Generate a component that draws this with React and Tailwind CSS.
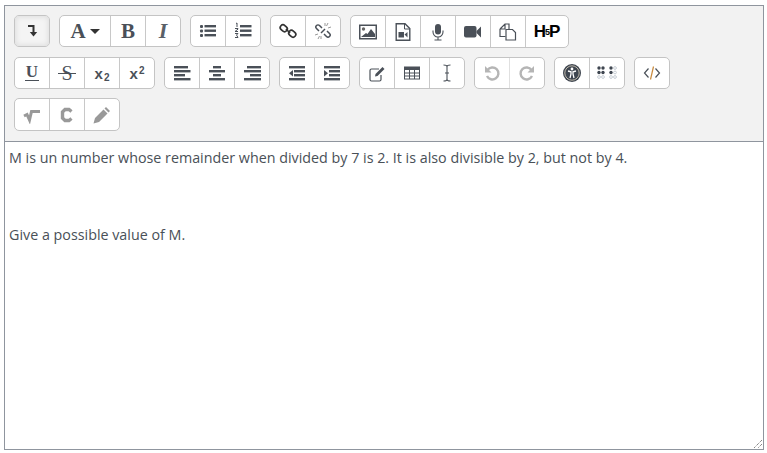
const ink = "#4a5058";

const Svg = ({ children, w = 18, h = 18, vb = "0 0 18 18" }) => (
  <svg width={w} height={h} viewBox={vb} fill="none" className="block">
    {children}
  </svg>
);

const Lines = ({ rows }) => (
  <Svg>
    {rows.map(([x, y, w, t = 2], i) => (
      <rect key={i} x={x} y={y} width={w} height={t} fill={ink} />
    ))}
  </Svg>
);

const serif = "font-['Liberation_Serif',serif]";

const icons = {
  wrap: (
    <Svg>
      <path d="M5 4h5.500v8" stroke="#333" strokeWidth="2" />
      <path d="M6.800 10h7.400L10.500 14.500z" fill="#333" />
    </Svg>
  ),
  font: (
    <div className="flex items-center gap-[4px]">
      <span className={`${serif} text-[21px] font-bold text-[#4a5058] leading-none`}>A</span>
      <span className="w-0 h-0 border-x-[5px] border-x-transparent border-t-[5px] border-t-[#333]" />
    </div>
  ),
  bold: <span className={`${serif} text-[21px] font-bold text-[#4a5058] leading-none`}>B</span>,
  italic: <span className={`${serif} text-[22px] italic font-bold text-[#5a6068] leading-none`}>I</span>,
  ul: (
    <Svg>
      <rect x="1" y="3" width="3" height="3" rx="1" fill={ink} />
      <rect x="1" y="7.500" width="3" height="3" rx="1" fill={ink} />
      <rect x="1" y="12" width="3" height="3" rx="1" fill={ink} />
      <rect x="5.500" y="3" width="11.500" height="2.400" fill={ink} />
      <rect x="5.500" y="7.500" width="11.500" height="2.400" fill={ink} />
      <rect x="5.500" y="12" width="11.500" height="2.400" fill={ink} />
    </Svg>
  ),
  ol: (
    <Svg>
      <rect x="6" y="3" width="11.500" height="2.400" fill={ink} />
      <rect x="6" y="7.500" width="11.500" height="2.400" fill={ink} />
      <rect x="6" y="12" width="11.500" height="2.400" fill={ink} />
      <path d="M2 1.500l1-.5v4M1 6.500h3v.6l-3 2.400h3M1 11.500h3l-1.500 1.500 1.500 2.500h-3" stroke={ink} strokeWidth="1" />
    </Svg>
  ),
  link: (
    <Svg>
      <g stroke="#333" strokeWidth="1.700">
        <rect x="1" y="3.500" width="7.500" height="5.500" rx="2.750" transform="rotate(42 4.750 6.250)" />
        <rect x="9.500" y="9" width="7.500" height="5.500" rx="2.750" transform="rotate(42 13.250 11.750)" />
        <path d="M7 7l4 4" />
      </g>
    </Svg>
  ),
  unlink: (
    <Svg>
      <g stroke="#4a5058" strokeWidth="1.500">
        <path d="M8 6 5.500 3.500a2 2 0 0 0-3 3L5 9" />
        <path d="M10 12l2.500 2.500a2 2 0 0 0 3-3L13 9" />
        <path d="M11 7 7 11" />
      </g>
      <path d="M11 1v3M14 1l-1.500 3M17 5l-3 1M1 13l3-1M4 17l1.500-3M7 17v-3" stroke="#999" />
    </Svg>
  ),
  image: (
    <Svg w={18} h={16} vb="0 0 18 16">
      <rect x=".75" y="1.250" width="16.500" height="13.500" stroke={ink} strokeWidth="1.500" />
      <circle cx="4.500" cy="5" r="1.700" fill="#666" />
      <path d="M2 13 7 9l1.500 1 3.500-5 4 5v3z" fill={ink} />
    </Svg>
  ),
  media: (
    <Svg w={16} h={18} vb="0 0 16 18">
      <path d="M1.200 .700h8.800l4.800 4.800v11.800h-13.600z" stroke={ink} strokeWidth="1.400" />
      <path d="M9.500 1v5h5" stroke={ink} strokeWidth="1" />
      <rect x="3.500" y="9" width="5.500" height="5.500" fill={ink} />
      <path d="M9.500 11.500l3-2.500v5.500z" fill={ink} />
    </Svg>
  ),
  mic: (
    <Svg>
      <rect x="6" y="1" width="6" height="10.500" rx="3" fill={ink} />
      <path d="M4 7.500v1.500a5 5 0 0 0 10 0V7.500M9 14v3M5.500 17h7" stroke={ink} strokeWidth="1.100" />
    </Svg>
  ),
  video: (
    <Svg>
      <rect x="0" y="3" width="12.500" height="11.500" rx="2" fill={ink} />
      <path d="M12.500 8 17 3.500v11L12.500 10z" fill={ink} />
    </Svg>
  ),
  manage: (
    <Svg>
      <path d="M1 6 6 1h4v5.500M1 6v7.500h5.500M6 1v5H1" stroke={ink} strokeWidth="1.200" />
      <path d="M7 6.500h6.500l3 3V17H7z" stroke={ink} strokeWidth="1.200" fill="#fff" />
    </Svg>
  ),
  h5p: (
    <div className="flex items-center font-['Liberation_Sans',sans-serif] font-bold text-black leading-none">
      <span className="text-[17px]">H</span>
      <span className="text-[9px] mx-[-1px] mt-[2px]">5</span>
      <span className="text-[17px]">P</span>
    </div>
  ),
  underline: (
    <div className="flex flex-col items-center">
      <span className={`${serif} text-[17px] font-bold text-[#4a5058] leading-[13px]`}>U</span>
      <span className="block w-[14px] h-[1px] bg-[#4a5058] mt-[2px]" />
    </div>
  ),
  strike: (
    <div className="relative flex items-center justify-center">
      <span className={`${serif} text-[20px] text-[#4a5058] leading-none`}>S</span>
      <span className="absolute left-[-3px] right-[-3px] top-[10px] h-[1px] bg-[#4a5058]" />
    </div>
  ),
  sub: (
    <span className="font-['Liberation_Sans',sans-serif] font-bold text-[15px] text-[#4a5058] leading-none mt-[3px]">
      x<span className="text-[10px] align-[-2px] ml-[1px]">2</span>
    </span>
  ),
  sup: (
    <span className="font-['Liberation_Sans',sans-serif] font-bold text-[15px] text-[#4a5058] leading-none mt-[1px]">
      x<span className="text-[10px] align-[5px] ml-[1px]">2</span>
    </span>
  ),
  left: <Lines rows={[[1, 2, 14, 2.400], [1, 6, 16.500, 2.400], [1, 10, 11, 2.400], [1, 14, 16.500, 2.400]]} />,
  center: <Lines rows={[[5, 2, 8, 2.400], [1, 6, 16, 2.400], [5, 10, 8, 2.400], [1, 14, 16, 2.400]]} />,
  right: <Lines rows={[[4, 2, 14, 2.400], [1, 6, 17, 2.400], [7, 10, 11, 2.400], [1, 14, 17, 2.400]]} />,
  outdent: (
    <Svg>
      <rect x="1" y="2" width="16" height="2.400" fill={ink} />
      <rect x="6" y="6" width="11" height="2.400" fill={ink} />
      <rect x="6" y="10" width="11" height="2.400" fill={ink} />
      <rect x="1" y="14" width="16" height="2.400" fill={ink} />
      <path d="M1 9.200l4-3.200v6.400z" fill={ink} />
    </Svg>
  ),
  indent: (
    <Svg>
      <rect x="1" y="2" width="16" height="2.400" fill={ink} />
      <rect x="6" y="6" width="11" height="2.400" fill={ink} />
      <rect x="6" y="10" width="11" height="2.400" fill={ink} />
      <rect x="1" y="14" width="16" height="2.400" fill={ink} />
      <path d="M5 9.200 1 6v6.400z" fill={ink} />
    </Svg>
  ),
  edit: (
    <Svg>
      <path d="M13 11v4.500a1.500 1.500 0 0 1-1.500 1.500h-8A1.500 1.500 0 0 1 2 15.500v-9A1.500 1.500 0 0 1 3.500 5H11" stroke={ink} strokeWidth="1.200" />
      <path d="M7 12.500 7.500 10 14.500 3l2 2-7 7z" fill={ink} />
    </Svg>
  ),
  table: (
    <Svg>
      <rect x="1.500" y="3" width="15" height="12" stroke={ink} strokeWidth="1" />
      <rect x="1.500" y="3" width="15" height="3" fill={ink} />
      <path d="M1.500 9h15M1.500 12h15M6.500 3v12M11.500 3v12" stroke={ink} strokeWidth="1" />
    </Svg>
  ),
  cursor: (
    <Svg>
      <path d="M5.500 1c2.500 0 3.500 .5 3.500 1.500v13c0 1-1 1.500-3.500 1.500M12.500 1C10 1 9 1.500 9 2.500v13c0 1 1 1.500 3.500 1.500M7 9h4" stroke={ink} strokeWidth="1.100" />
    </Svg>
  ),
  undo: (
    <Svg>
      <path d="M4.500 6A6 6 0 1 1 4 12" stroke="#b5b5b5" strokeWidth="2.400" />
      <path d="M2 2v6.500h6.500z" fill="#b5b5b5" />
    </Svg>
  ),
  redo: (
    <Svg>
      <path d="M13.500 6A6 6 0 1 0 14 12" stroke="#b5b5b5" strokeWidth="2.400" />
      <path d="M16 2v6.500H9.500z" fill="#b5b5b5" />
    </Svg>
  ),
  a11y: (
    <Svg>
      <circle cx="9" cy="9" r="9" fill="#3f4650" />
      <circle cx="9" cy="9" r="7.200" stroke="#f2e6d0" strokeWidth=".7" />
      <circle cx="9" cy="5" r="1.400" fill="#fff" />
      <path d="M5 7l3 .8V10l-1 4M13 7l-3 .8V10l1 4" stroke="#fff" strokeWidth="1.300" />
    </Svg>
  ),
  braille: (
    <Svg w={21} h={14} vb="0 0 21 14">
      {[[2, 2, 1], [6, 2, 1], [14, 2, 1], [18, 2, 0], [2, 6.500, 1], [6, 6.500, 1], [14, 6.500, 1], [18, 6.500, 0], [2, 11, 0], [6, 11, 0], [14, 11, 0], [18, 11, 0]].map(
        ([cx, cy, on], i) =>
          on ? (
            <circle key={i} cx={cx} cy={cy} r="1.700" fill="#3f4650" />
          ) : (
            <circle key={i} cx={cx} cy={cy} r="1.400" stroke="#bbc3cc" strokeWidth=".8" />
          ),
      )}
    </Svg>
  ),
  html: (
    <Svg>
      <path d="M5.500 4.500 1.500 9l4 4.500M12.500 4.500l4 4.500-4 4.500" stroke={ink} strokeWidth="1.200" />
      <path d="M10.500 2.500 7.500 15.500" stroke="#c98a3c" strokeWidth="1.200" />
    </Svg>
  ),
  sqrt: (
    <Svg>
      <path d="M1 10 4 8.500 6.500 14 8.500 5.500H17" stroke="#999" strokeWidth="3" />
    </Svg>
  ),
  chem: (
    <Svg>
      <path d="M13.500 5.500 11 3.500H7L4.500 6v6L7 14.500h4l2.500-2" stroke="#999" strokeWidth="3.400" />
    </Svg>
  ),
  pencil: (
    <Svg>
      <path d="M.500 17.500 2 12l8.500-8.500 4 4L6 16zM11.500 2.500l1.500-1.500 4 4-1.500 1.500z" fill="#999" />
    </Svg>
  ),
};

const rows = [
  [["wrap"], ["font", "bold", "italic"], ["ul", "ol"], ["link", "unlink"], ["image", "media", "mic", "video", "manage", "h5p"]],
  [
    ["underline", "strike", "sub", "sup"],
    ["left", "center", "right"],
    ["outdent", "indent"],
    ["edit", "table", "cursor"],
    ["undo", "redo"],
    ["a11y", "braille"],
    ["html"],
  ],
  [["sqrt", "chem", "pencil"]],
];

function Group({ names, tall }) {
  return (
    <div className={`flex rounded-[5px] border border-[#c4c4c4] bg-white overflow-hidden ${tall ? "h-[33px]" : "h-[32px]"}`}>
      {names.map((name, i) => {
        const width = name === "font" ? "w-[50px]" : name === "h5p" ? "w-[43px]" : i === 0 ? "w-[34px]" : "w-[35px]";
        const divider = i === 0 ? "" : name === "redo" ? "border-l border-[#e0e0e0]" : "border-l border-[#c8c8c8]";
        const active = name === "wrap" ? "bg-[#f4f4f4] shadow-[inset_0_0_6px_rgba(0,0,0,0.12)]" : "";
        return (
          <div key={name} className={`${width} ${divider} ${active} flex items-center justify-center`}>
            {icons[name]}
          </div>
        );
      })}
    </div>
  );
}

export default function App() {
  return (
    <div className="w-[767px] h-[453px] bg-white pt-[5px] pl-[4px] font-['Open_Sans',sans-serif]">
      <div className="w-[760px] h-[445px] border border-[#8f959e] flex flex-col">
        <div className="bg-[#f2f2f2] border-b border-[#8f959e] h-[136px] pt-[9px] pl-[9px] flex flex-col gap-[9px]">
          {rows.map((row, r) => (
            <div key={r} className="flex items-start gap-[9px]">
              {row.map((names) => (
                <Group key={names[0]} names={names} tall={r === 2 || names[0] === "image"} />
              ))}
            </div>
          ))}
        </div>
        <div className="relative flex-1 bg-white px-[4px] pt-[6px] text-[14.3px] leading-[19px] text-[#495057]">
          <p>M is un number whose remainder when divided by 7 is 2. It is also divisible by 2, but not by 4.</p>
          <p className="mt-[58px]">Give a possible value of M.</p>
          <svg width="11" height="11" viewBox="0 0 11 11" className="absolute right-[0px] bottom-[0px]">
            <path d="M10 2 2 10M10 6 6 10" stroke="#555" strokeWidth="1" strokeDasharray="1 1" />
          </svg>
        </div>
      </div>
    </div>
  );
}
